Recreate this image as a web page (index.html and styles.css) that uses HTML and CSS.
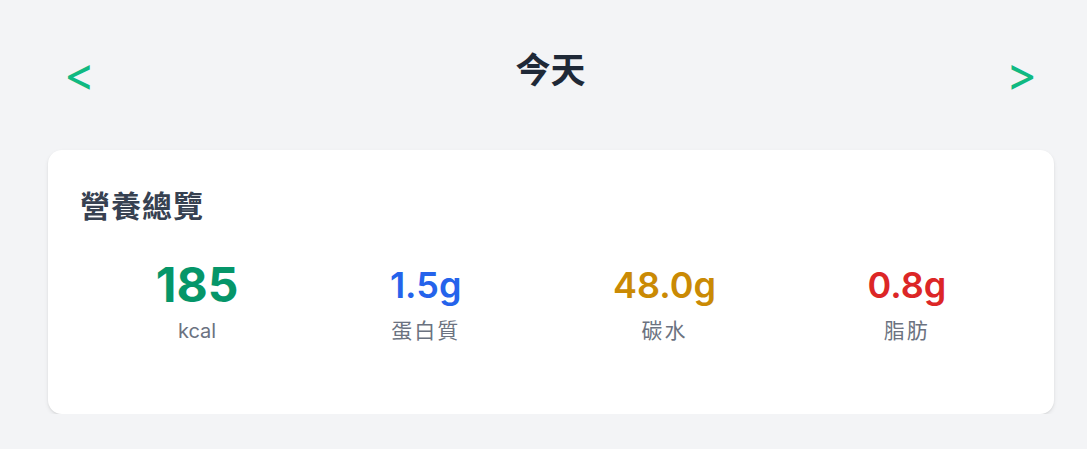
FILE: index.html
```html
<!DOCTYPE html>
<html lang="zh-Hant">

<head>
    <meta charset="UTF-8">
    <meta name="viewport" content="width=device-width, initial-scale=1.0">
    <title>今天</title>
    <link rel="stylesheet" href="styles.css">
</head>

<body>
    <div class="page">
        <!-- 日期切換 -->
        <div class="day-nav">
            <a href="javascript:;" class="nav-btn">&lt;</a>
            <h1 class="day-title">今天</h1>
            <a href="javascript:;" class="nav-btn">&gt;</a>
        </div>

        <!-- 營養總覽 -->
        <div class="card">
            <h2 class="card-title">營養總覽</h2>
            <ul class="stats">
                <li class="stat">
                    <span class="stat-value big green">185</span>
                    <span class="stat-label">kcal</span>
                </li>
                <li class="stat">
                    <span class="stat-value blue">1.5g</span>
                    <span class="stat-label cjk">蛋白質</span>
                </li>
                <li class="stat">
                    <span class="stat-value yellow">48.0g</span>
                    <span class="stat-label cjk">碳水</span>
                </li>
                <li class="stat">
                    <span class="stat-value red">0.8g</span>
                    <span class="stat-label cjk">脂肪</span>
                </li>
            </ul>
        </div>
    </div>
</body>

</html>
```

FILE: styles.css
```css
* {
    margin: 0;
    padding: 0;
    box-sizing: border-box;
}

li {
    list-style: none;
}

a {
    text-decoration: none;
}

body {
    background-color: #f3f4f6;
    font-family: Inter, "Noto Sans CJK TC", sans-serif;
}

.page {
    width: 1006px;
    margin-left: 48px;
    padding-top: 50px;
}

.day-nav {
    display: flex;
    justify-content: space-between;
    align-items: center;
    padding: 0 17px 0 16px;
    height: 40px;
}

.nav-btn {
    color: #10b981;
    font-size: 47px;
    font-weight: 400;
    line-height: 40px;
    padding-top: 8px;
}

.day-title {
    color: #1f2937;
    font-size: 35px;
    font-weight: 700;
    line-height: 40px;
}

.card {
    margin-top: 60px;
    background: #fff;
    border-radius: 14px;
    padding: 38px 32px 69px;
    box-shadow: 0 2px 4px rgba(0, 0, 0, .08), 0 1px 2px rgba(0, 0, 0, .06);
}

.card-title {
    color: #374151;
    font-size: 30px;
    font-weight: 700;
    line-height: 36px;
    letter-spacing: 1px;
}

.stats {
    display: flex;
    justify-content: space-around;
    margin-top: 37px;
}

.stat {
    display: flex;
    flex-direction: column;
    align-items: center;
}

.stat-value {
    font-size: 36px;
    font-weight: 600;
    line-height: 48px;
}

.stat-value.big {
    font-size: 48px;
    font-weight: 700;
}

.stat-label {
    margin-top: 8px;
    color: #6b7280;
    font-size: 20px;
    line-height: 28px;
}

.stat-label.cjk {
    font-size: 21px;
    letter-spacing: 2px;
}

.green {
    color: #059669;
}

.blue {
    color: #2563eb;
}

.yellow {
    color: #ca8a04;
}

.red {
    color: #dc2626;
}
```
